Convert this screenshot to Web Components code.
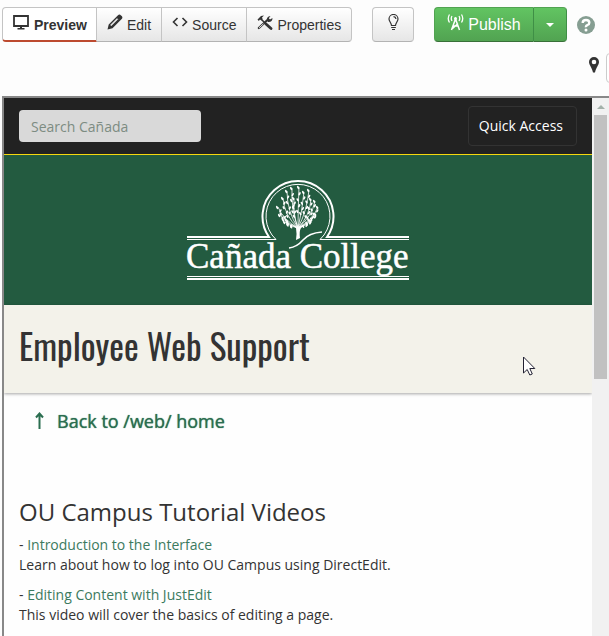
<!DOCTYPE html>
<html lang="en">
<head>
<meta charset="utf-8">
<meta name="viewport" content="width=device-width, initial-scale=1">
<title>Employee Web Support</title>
<style>
  html, body {
    height: 100%;
    margin: 0;
  }
  body {
    overflow: hidden;
    background: #fdfdfd;
    color: #333;
    font-family: "Liberation Sans", Arial, sans-serif;
    font-size: 14px;
  }
</style>
</head>
<body>
<ou-app>
  <ou-toolbar slot="toolbar"></ou-toolbar>
  <ou-location slot="toolbar"></ou-location>
  <site-nav slot="page"></site-nav>
  <site-banner slot="page"></site-banner>
  <page-title slot="page">Employee Web Support</page-title>
  <page-content slot="page">
    <back-link slot="back" href="#web">Back to /web/ home</back-link>
    <span slot="heading">OU Campus Tutorial Videos</span>
    <video-entry href="#interface" label="Introduction to the Interface">Learn about how to log into OU Campus using DirectEdit.</video-entry>
    <video-entry href="#justedit" label="Editing Content with JustEdit">This video will cover the basics of editing a page.</video-entry>
  </page-content>
</ou-app>

<script>
const ICONS = {
  monitor: '<path d="M1 1h14v10H1z" fill="none" stroke="currentColor" stroke-width="1.800"/><path d="M7 11h2v2h2.500v1.500h-7V13H7z"/>',
  pencil: '<path d="M0.500 15.500l1.200-5L11 1.200q1.500-1.300 3 .2l.7.700q1.400 1.500 0 2.900L5.500 14.200z"/><path d="M3.500 11l6.500-6.500.8.8-6.500 6.500z" fill="#f4f4f4" stroke="#f4f4f4" stroke-width=".5"/>',
  code: '<path d="M5.500 2L1.500 6l4 4M10.500 2l4 4-4 4" fill="none" stroke="currentColor" stroke-width="1.600"/>',
  tools: '<path d="M4 4l5 5" stroke="currentColor" stroke-width="1.600"/><path d="M9 9l5 4.500" stroke="currentColor" stroke-width="2.800" stroke-linecap="round"/><path d="M0.500 4.500L4 1l3-.5-2 2 .6 1.500L4.500 5.500 3 4.500 1.800 6z"/><path d="M1.800 13L11 4.500" stroke="currentColor" stroke-width="2.200" stroke-linecap="round"/><path d="M2 12.800l4.500-4" stroke="#f4f4f4" stroke-width=".9"/><path d="M10 5.500q-.8-4 3.500-4.500l-1.700 2.300 1.200 1.300 2.500-1.500q0 4.300-4.500 3.900z"/>',
  bulb: '<g fill="none" stroke="currentColor" stroke-width="1.200"><path d="M3.500 11.500C3.500 9 1 7.500 1 5a4.500 4.500 0 0 1 9 0c0 2.500-2.500 4-2.500 6.500z"/><path d="M5.500 2.700Q7.700 2.800 8 5M3.200 13.500h4.600M4 15.500h3"/></g>',
  tower: '<g fill="none" stroke="currentColor" stroke-width="1.500"><path d="M4.500 16L8.500 5l4 11M6 12h5M5.500 14.500l5.500-5" /><path d="M5 2Q3.500 4.500 5 7M12 2q1.500 2.500 0 5M2.500.5q-2.500 4 0 8M14.500.5q2.500 4 0 8" stroke-width="1.300"/></g><circle cx="8.500" cy="4.500" r="1.500"/>',
  pin: '<path d="M5 0a5 5 0 0 1 5 5c0 3-3 5.500-4 10.500H4C3 10.500 0 8 0 5a5 5 0 0 1 5-5zm0 2.700a2.300 2.300 0 1 0 0 4.600 2.300 2.300 0 0 0 0-4.600z" fill-rule="evenodd"/>',
  help: '<circle cx="9" cy="9" r="9"/><path d="M5.700 7Q5.700 4 9 4t3.300 2.700Q12.300 8.300 10.500 9T9 11.200" fill="none" stroke="#fff" stroke-width="2.400"/><circle cx="9" cy="14" r="1.500" fill="#fff"/>',
  caret: '<path d="M0 0h8L4 4z"/>',
  arrow: '<path d="M4.500 17V2M1 5.500L4.500 1.500 8 5.500" fill="none" stroke="currentColor" stroke-width="2"/>'
}

const SIZES = {
  monitor: [17, 15], pencil: [16, 16], code: [16, 12], tools: [16, 15], bulb: [11, 17],
  tower: [17, 17], pin: [10, 16], help: [18, 18], caret: [8, 4], arrow: [9, 18]
}

class OuIcon extends HTMLElement {
  constructor() {
    super()
    this.attachShadow({ mode: 'open' })
  }

  connectedCallback() {
    const name = this.getAttribute('name')
    const [w, h] = SIZES[name]
    this.shadowRoot.innerHTML = `
      <style>
        :host { display: inline-block; flex: none; }
        svg { display: block; fill: currentColor; }
      </style>
      <svg width="${w}" height="${h}" viewBox="0 0 ${w} ${h}" aria-hidden="true">${ICONS[name]}</svg>
    `
  }
}

// outer shell: toolbar on top, previewed page with its scrollbar below
class OuApp extends HTMLElement {
  constructor() {
    super()
    this.attachShadow({ mode: 'open' })
    this.shadowRoot.innerHTML = `
      <style>
        :host { display: flex; flex-direction: column; height: 100vh; }
        header { flex: none; padding: 7px 0 13px 2px; }
        .frame {
          flex: 1;
          min-height: 0;
          display: flex;
          margin-left: 2px;
          border: solid #888;
          border-width: 2px 0 0 2px;
          background: #fefefe;
        }
        .page {
          flex: 1;
          min-width: 0;
          overflow: hidden;
          font-family: "Open Sans", sans-serif;
        }
      </style>
      <header><slot name="toolbar"></slot></header>
      <div class="frame">
        <main class="page"><slot name="page"></slot></main>
        <scroll-track></scroll-track>
      </div>
      <mouse-pointer></mouse-pointer>
    `
  }
}

class ScrollTrack extends HTMLElement {
  constructor() {
    super()
    this.attachShadow({ mode: 'open' })
    this.shadowRoot.innerHTML = `
      <style>
        :host {
          display: flex;
          flex-direction: column;
          flex: none;
          width: 17px;
          background: #f1f1f1;
          color: #a3b1aa;
        }
        .up { display: flex; align-items: center; justify-content: center; height: 17px; }
        ou-icon { transform: rotate(180deg); }
        .thumb { height: 49%; margin: 0 2px; background: #c1c1c1; }
      </style>
      <div class="up"><ou-icon name="caret"></ou-icon></div>
      <div class="thumb"></div>
    `
  }
}

class MousePointer extends HTMLElement {
  constructor() {
    super()
    this.attachShadow({ mode: 'open' })
    this.shadowRoot.innerHTML = `
      <style>
        :host { position: absolute; left: 523px; top: 356px; pointer-events: none; }
        svg { display: block; }
      </style>
      <svg width="13" height="20" viewBox="0 0 13 20" aria-hidden="true">
        <path d="M.5 1v16l3.700-3.500 2.600 5.500 2.500-1-2.500-5.500h5z" fill="#fff" stroke="#223" stroke-width="1"/>
      </svg>
    `
  }
}

class OuToolbar extends HTMLElement {
  constructor() {
    super()
    this.attachShadow({ mode: 'open' })
    this.shadowRoot.innerHTML = `
      <style>
        :host { display: flex; align-items: center; height: 35px; }
        .group { display: flex; flex: none; margin-right: 20px; }
        .help {
          display: flex;
          flex: none;
          margin-left: -10px;
          padding: 0;
          border: 0;
          background: none;
          color: #869e92;
        }
      </style>
      <div class="group">
        <tool-button icon="monitor" class="first active">Preview</tool-button>
        <tool-button icon="pencil">Edit</tool-button>
        <tool-button icon="code">Source</tool-button>
        <tool-button icon="tools" class="last">Properties</tool-button>
      </div>
      <div class="group">
        <tool-button icon="bulb" class="first last bare" label="Gadgets"></tool-button>
      </div>
      <div class="group">
        <tool-button icon="tower" class="first green">Publish</tool-button>
        <tool-button icon="caret" class="last green bare" label="More publish options"></tool-button>
      </div>
      <button class="help" type="button" aria-label="Help"><ou-icon name="help"></ou-icon></button>
    `
  }
}

class ToolButton extends HTMLElement {
  constructor() {
    super()
    this.attachShadow({ mode: 'open' })
  }

  connectedCallback() {
    const icon = this.getAttribute('icon')
    const label = this.getAttribute('label')
    this.shadowRoot.innerHTML = `
      <style>
        :host { display: block; }
        button {
          display: flex;
          align-items: center;
          box-sizing: border-box;
          height: 35px;
          gap: 4px;
          padding: 0 10px;
          border: 1px solid #c4c4c4;
          border-left-width: 0;
          border-bottom-color: #b3b3b3;
          background: linear-gradient(#fff, #e6e6e6);
          color: #333;
          font: 14px/20px "Liberation Sans", Arial, sans-serif;
        }
        ou-icon { margin-bottom: 5px; }
        :host(.first) button { border-left-width: 1px; border-radius: 4px 0 0 4px; }
        :host(.last) button { border-radius: 0 4px 4px 0; }
        :host(.first.last) button { border-radius: 4px; }
        :host(.bare) button { padding: 0 14px 0 15px; }
        :host(.active) button {
          padding: 1px 9px 0 10px;
          background: #fff;
          border-bottom: 2px solid #bd4b30;
          font-weight: bold;
        }
        :host(.green) button {
          padding: 0 12px;
          border-color: #51a351 #3f8f46 #387038 #51a351;
          background: linear-gradient(#62c462, #51a351);
          color: #fff;
          font-size: 16px;
        }
        :host(.green.bare) ou-icon { margin-bottom: 0; }
      </style>
      <button type="button" ${label ? `aria-label="${label}"` : ''}>
        <ou-icon name="${icon}"></ou-icon><slot></slot>
      </button>
    `
  }
}

// second row, its field runs out of the right edge of the window
class OuLocation extends HTMLElement {
  constructor() {
    super()
    this.attachShadow({ mode: 'open' })
    this.shadowRoot.innerHTML = `
      <style>
        :host {
          display: flex;
          align-items: center;
          justify-content: flex-end;
          gap: 7px;
          height: 30px;
          margin-top: 11px;
          overflow: hidden;
        }
        label { padding-bottom: 4px; }
        input {
          box-sizing: border-box;
          flex: none;
          width: 200px;
          height: 30px;
          margin-right: -197px;
          border: 1px solid #ccc;
          border-radius: 4px;
          background: #fff;
        }
      </style>
      <label for="location" aria-label="Location"><ou-icon name="pin"></ou-icon></label>
      <input id="location" type="text">
    `
  }
}

class SiteNav extends HTMLElement {
  constructor() {
    super()
    this.attachShadow({ mode: 'open' })
    this.shadowRoot.innerHTML = `
      <style>
        :host {
          display: flex;
          align-items: center;
          justify-content: space-between;
          height: 56px;
          padding: 0 15px;
          border-bottom: 1px solid #f5d80f;
          background: #222;
        }
        input {
          box-sizing: border-box;
          width: 182px;
          height: 32px;
          padding: 0 12px;
          border: 0;
          border-radius: 4px;
          background: #d9d9d9;
          font: 14px/20px "Open Sans", sans-serif;
        }
        input::placeholder { color: #7d8c82; opacity: 1; }
        button {
          height: 40px;
          padding: 0 13px 0 10px;
          border: 1px solid #333;
          border-radius: 4px;
          background: none;
          color: #fff;
          font: 14px/20px "Open Sans", sans-serif;
        }
      </style>
      <input type="search" placeholder="Search Cañada" aria-label="Search Cañada">
      <button type="button">Quick Access</button>
    `
  }
}

// Branches fan out from the top of the trunk, [tip x, tip y, bend x]
const BRANCHES = [
  [98, 37, 103], [103, 28, 104], [100, 45, 106], [107, 21, 107], [112, 18, 111], [114, 28, 113],
  [119, 17, 118], [124, 22, 122], [129, 20, 127], [131, 29, 130], [135, 31, 132], [138, 37, 133],
  [105, 52, 111], [131, 51, 125], [136, 44, 130]
]

class SiteBanner extends HTMLElement {
  constructor() {
    super()
    this.attachShadow({ mode: 'open' })
    this.shadowRoot.innerHTML = `
      <style>
        :host { display: flex; justify-content: center; padding: 15px 0; background: #235b40; }
        svg { display: block; }
        text { font-family: "Liberation Serif", "Times New Roman", serif; font-size: 35px; }
      </style>
      <svg width="236" height="120" viewBox="0 0 236 120" role="img" aria-label="Cañada College">
        <g fill="none" stroke="#fff">
          <path d="M7 67H89A35.500 35.500 0 1 1 147 67H229" stroke-width="2"/>
          <path d="M7 69.500H96L92 65A32 32 0 1 1 144 65L140 69.500H229"/>
          <path d="M109 78Q117 77 123 70T142 62" stroke-width="1.600"/>
          <path d="M7 106.500H229"/>
          <path d="M7 109H229" stroke-width="2"/>
          <g stroke-width=".8">${BRANCHES.map(b => this.branch(b)).join('')}</g>
        </g>
        <path d="M111 54l5 4q1 5 0 12l4-2q-1-7 1-10l5-4-7 3h-2z" fill="#fff"/>
        <g fill="#fff">${BRANCHES.map(b => this.leaves(b)).join('')}</g>
        <text x="6" y="98" fill="#fff" stroke="#fff" stroke-width=".5">Cañada College</text>
      </svg>
    `
  }

  branch([x, y, bend]) {
    return `<path d="M118 58Q${bend} ${(y + 58) / 2 + 2} ${x} ${y}"/>`
  }

  // a leaf at the tip and more leaves further down the same curve
  leaves([x, y, bend]) {
    const my = (y + 58) / 2 + 2
    return [0.44, 0.58, 0.72, 0.86, 1].map((t, i) => {
      const u = 1 - t
      const px = u * u * 118 + 2 * u * t * bend + t * t * x
      const py = u * u * 58 + 2 * u * t * my + t * t * y
      const side = i % 2 ? 1 : -1
      return `<ellipse cx="${px + side}" cy="${py}" rx=".9" ry="1.800" transform="rotate(${side * 30} ${px} ${py})"/>`
    }).join('')
  }
}

class PageTitle extends HTMLElement {
  constructor() {
    super()
    this.attachShadow({ mode: 'open' })
    this.shadowRoot.innerHTML = `
      <style>
        :host {
          display: block;
          padding: 16px 15px 24px;
          background: #f3f2ea;
          box-shadow: 0 1px 3px rgba(0, 0, 0, 0.35);
        }
        h1 {
          margin: 0;
          color: #333;
          font: 400 35px/48px Oswald, "Liberation Sans Narrow", "Arial Narrow", sans-serif;
        }
      </style>
      <h1><slot></slot></h1>
    `
  }
}

class PageContent extends HTMLElement {
  constructor() {
    super()
    this.attachShadow({ mode: 'open' })
    this.shadowRoot.innerHTML = `
      <style>
        :host { display: block; padding: 16px 15px; line-height: 20px; }
        h2 { margin: 62px 0 8px; font-size: 24px; line-height: 30px; font-weight: 400; }
      </style>
      <slot name="back"></slot>
      <h2><slot name="heading"></slot></h2>
      <slot></slot>
    `
  }
}

class BackLink extends HTMLElement {
  constructor() {
    super()
    this.attachShadow({ mode: 'open' })
    this.shadowRoot.innerHTML = `
      <style>
        :host { display: block; padding-left: 16px; }
        a {
          display: inline-flex;
          align-items: center;
          gap: 13px;
          color: #2b6e50;
          font-size: 18px;
          line-height: 24px;
          text-decoration: none;
          text-shadow: 0 0 1px currentColor;
        }
      </style>
      <a href="${this.getAttribute('href')}"><ou-icon name="arrow"></ou-icon><slot></slot></a>
    `
  }
}

class VideoEntry extends HTMLElement {
  constructor() {
    super()
    this.attachShadow({ mode: 'open' })
    this.shadowRoot.innerHTML = `
      <style>
        :host { display: block; }
        p { margin: 0 0 10px; }
        a { color: #3c7a5e; text-decoration: none; }
      </style>
      <p>- <a href="${this.getAttribute('href')}">${this.getAttribute('label')}</a><br><slot></slot></p>
    `
  }
}

customElements.define('ou-icon', OuIcon)
customElements.define('scroll-track', ScrollTrack)
customElements.define('mouse-pointer', MousePointer)
customElements.define('tool-button', ToolButton)
customElements.define('ou-toolbar', OuToolbar)
customElements.define('ou-location', OuLocation)
customElements.define('site-nav', SiteNav)
customElements.define('site-banner', SiteBanner)
customElements.define('page-title', PageTitle)
customElements.define('page-content', PageContent)
customElements.define('back-link', BackLink)
customElements.define('video-entry', VideoEntry)
customElements.define('ou-app', OuApp)
</script>
</body>
</html>
